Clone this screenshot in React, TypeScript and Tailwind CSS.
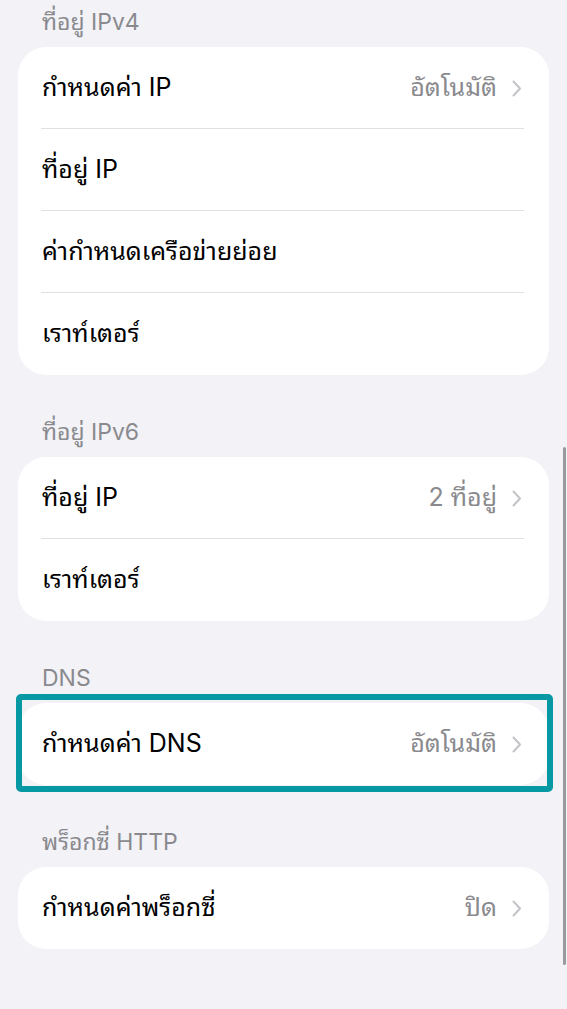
import React from 'react'

type Row = { label: string; value?: string; chevron?: boolean }

type Section = { title: string; rows: Row[]; highlight?: boolean }

const sections: Section[] = [
  {
    title: 'ที่อยู่ IPv4',
    rows: [
      { label: 'กำหนดค่า IP', value: 'อัตโนมัติ', chevron: true },
      { label: 'ที่อยู่ IP' },
      { label: 'ค่ากำหนดเครือข่ายย่อย' },
      { label: 'เราท์เตอร์' },
    ],
  },
  {
    title: 'ที่อยู่ IPv6',
    rows: [
      { label: 'ที่อยู่ IP', value: '2 ที่อยู่', chevron: true },
      { label: 'เราท์เตอร์' },
    ],
  },
  {
    title: 'DNS',
    highlight: true,
    rows: [{ label: 'กำหนดค่า DNS', value: 'อัตโนมัติ', chevron: true }],
  },
  {
    title: 'พร็อกซี่ HTTP',
    rows: [{ label: 'กำหนดค่าพร็อกซี่', value: 'ปิด', chevron: true }],
  },
]

const Chevron: React.FC = () => (
  <svg width="10" height="17" viewBox="0 0 10 17" fill="none">
    <path d="M1.5 1.5L8 8.5L1.5 15.5" stroke="#c4c4c8" strokeWidth="2" strokeLinecap="round" strokeLinejoin="round" />
  </svg>
)

const SettingsRow: React.FC<{ row: Row; last: boolean }> = ({ row, last }) => (
  <div className="relative h-[82px] flex items-center pl-[24px] pr-[27px]">
    <span className="flex-1 text-[25px] text-black">{row.label}</span>
    {row.value && <span className="text-[25px] text-[#8a8a8e]">{row.value}</span>}
    {row.chevron && (
      <span className="ml-[15px] flex items-center">
        <Chevron />
      </span>
    )}
    {!last && <div className="absolute bottom-0 left-[23px] right-[25px] h-px bg-[#e0e0e4]" />}
  </div>
)

const App: React.FC = () => {
  return (
    <div
      className="relative min-h-[1009px] bg-[#f2f2f7] pt-[9px] overflow-hidden"
      style={{
        fontFamily:
          'Inter, "Noto Sans Thai Looped", "Noto Looped Thai", Loma, Garuda, "Noto Sans Thai", "Noto Sans", sans-serif',
      }}
    >
      <div className="flex flex-col gap-[44px]">
        {sections.map((section) => (
          <div key={section.title}>
            <div className="pl-[42px] mb-[12px] text-[23px] leading-[26px] text-[#8a8a8e]">
              {section.title}
            </div>
            <div className="relative mx-[18px]">
              <div className="bg-white rounded-[28px] overflow-hidden">
                {section.rows.map((row, i) => (
                  <SettingsRow key={row.label} row={row} last={i === section.rows.length - 1} />
                ))}
              </div>
              {section.highlight && (
                <div className="absolute left-[-2px] right-[-4px] top-[-9px] bottom-[-7px] border-[6px] border-[#0799a3] rounded-[5px]" />
              )}
            </div>
          </div>
        ))}
      </div>
      {/* scroll indicator */}
      <div className="absolute left-[563px] top-[447px] w-[3px] h-[518px] rounded-full bg-[#9a9a9e]" />
    </div>
  )
}

export default App
